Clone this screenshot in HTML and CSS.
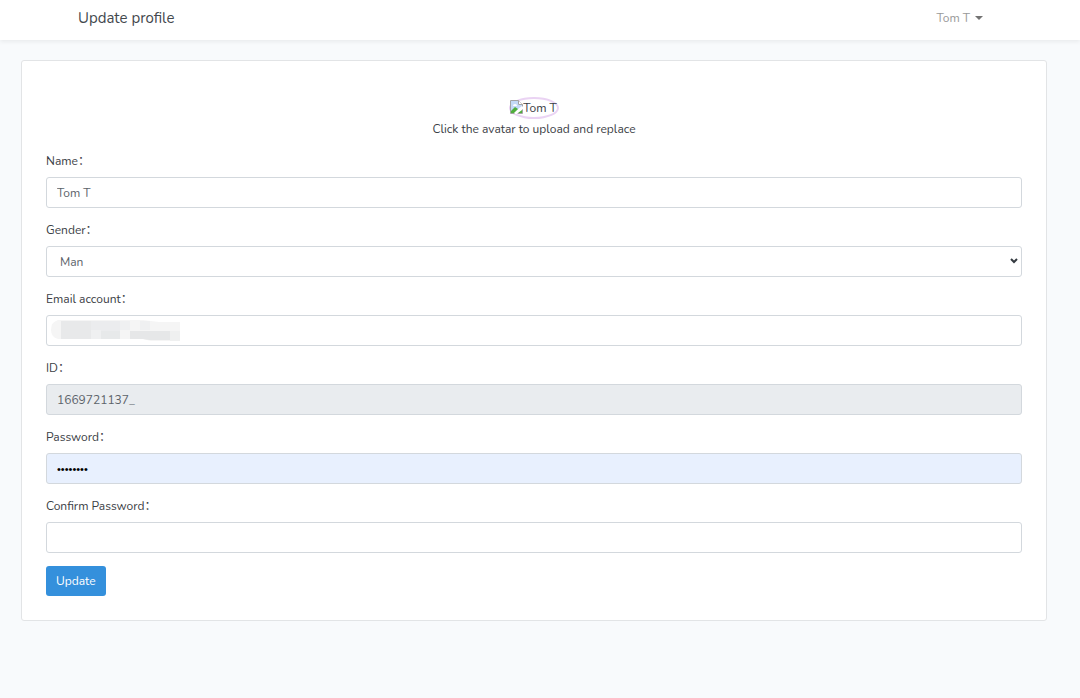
FILE: index.html
```html
<!DOCTYPE html>
<html lang="en">
<head>
    <meta charset="UTF-8">
    <meta name="viewport" content="width=device-width, initial-scale=1.0">
    <title>Update profile</title>
    <link rel="stylesheet" href="styles.css">
</head>
<body>
    <nav class="navbar">
        <a class="navbar-brand" href="#">Update profile</a>
        <a class="user-menu" href="#">Tom T</a>
    </nav>

    <main class="content">
        <form class="card">
            <div class="avatar-box">
                <button type="button" class="avatar">
                    <svg width="13" height="14" viewBox="0 0 13 14">
                        <path d="M0.500 0.500H8.500L12.500 4.500V13.500H0.500Z" fill="#fff" stroke="#a3a3a3"/>
                        <path d="M1 1H8V5H12V6L3 13H1Z" fill="#c3d9f7"/>
                        <path d="M3 6a2 2 0 0 1 4 0Z" fill="#fff"/>
                        <path d="M1 13V11L5 7L8 9L4 13Z" fill="#4fae3c"/>
                        <path d="M8.500 0.500V4.500H12.500" fill="#fff" stroke="#a3a3a3"/>
                        <path d="M4 14L13 6V9L7 14Z" fill="#fff"/>
                        <path d="M8 13L12 10V13Z" fill="#4fae3c"/>
                    </svg>
                    <span>Tom T</span>
                </button>
                <p class="avatar-tip">Click the avatar to upload and replace</p>
            </div>

            <div class="form-group">
                <label for="name">Name：</label>
                <input type="text" id="name" class="form-control" value="Tom T">
            </div>
            <div class="form-group">
                <label for="gender">Gender：</label>
                <div class="field">
                    <select id="gender" class="form-control">
                        <option>Man</option>
                        <option>Woman</option>
                    </select>
                    <svg class="chevron" width="8" height="6" viewBox="0 0 8 6">
                        <path d="M1 1L4 4L7 1" fill="none" stroke="#343a40" stroke-width="2"/>
                    </svg>
                </div>
            </div>
            <div class="form-group">
                <label for="email">Email account：</label>
                <div class="field">
                    <input type="email" id="email" class="form-control">
                    <svg class="redacted" width="136" height="23" viewBox="0 0 136 23">
                        <path d="M7 1H92L108 3H129V22H100L92 20H7Q0 18 0 11Q0 3 7 1Z" fill="#f5f5f5"/>
                        <path d="M10 2H40V20H10Z" fill="#e8e9ea"/>
                        <path d="M40 2H69V20H50V11H40Z" fill="#ebecee"/>
                        <path d="M40 11H50V20H40ZM69 2H79V11H69ZM89 2H99V11H89Z" fill="#eff0f1"/>
                        <path d="M50 12H69V20H50Z" fill="#e7e9ea"/>
                        <path d="M79 12H119V21H98L92 20H79Z" fill="#e6e7e8"/>
                        <path d="M119 12H129V22H119Z" fill="#eff0f0"/>
                    </svg>
                </div>
            </div>
            <div class="form-group">
                <label for="account-id">ID：</label>
                <input type="text" id="account-id" class="form-control" value="1669721137_" readonly>
            </div>
            <div class="form-group">
                <label for="password">Password：</label>
                <input type="password" id="password" class="form-control autofilled" value="12345678">
            </div>
            <div class="form-group">
                <label for="confirm">Confirm Password：</label>
                <input type="password" id="confirm" class="form-control">
            </div>
            <button type="submit" class="btn">Update</button>
        </form>
    </main>
</body>
</html>
```

FILE: styles.css
```css
* { box-sizing: border-box; }
body {
    margin: 0;
    font-family: Nunito, Lato, "Noto Sans CJK SC", sans-serif;
    font-size: 12px;
    line-height: 20px;
    color: #3b4045;
    background-color: #f8fafc;
}
.navbar {
    display: flex;
    justify-content: space-between;
    align-items: center;
    height: 40px;
    padding: 0 97px 4px 78px;
    background: #ffffff;
    box-shadow: 0 2px 4px rgba(0, 0, 0, 0.06);
}
.navbar-brand { font-size: 15px; color: #43484d; text-decoration: none; }
.user-menu {
    display: flex;
    align-items: center;
    gap: 5px;
    color: #999999;
    text-decoration: none;
}
.user-menu::after {
    content: "";
    border-top: 4px solid #737373;
    border-left: 4px solid transparent;
    border-right: 4px solid transparent;
}
.content { padding: 20px 33px 20px 21px; }
.card {
    padding: 36px 24px 24px;
    background: #ffffff;
    border: 1px solid #e2e4e6;
    border-radius: 3px;
}
.avatar-box {
    display: flex;
    flex-direction: column;
    align-items: center;
}
.avatar {
    display: flex;
    align-items: center;
    height: 22px;
    padding: 0;
    border: 2px solid #ead3f3;
    border-radius: 50%;
    background: none;
    font: inherit;
    color: inherit;
    cursor: pointer;
}
.avatar svg { margin: 0 0 3px -1px; }
.avatar-tip { margin: 0; }
.form-group { padding-top: 12px; }
.form-group label { display: block; height: 20px; margin-bottom: 6px; }
.form-control {
    display: block;
    width: 100%;
    height: 31px;
    padding: 0 10px;
    border: 1px solid #d3d8dd;
    border-radius: 3px;
    background: #ffffff;
    font: inherit;
    color: #5c636a;
}
.form-control[readonly] { background: #e9ecef; }
.form-control.autofilled {
    background: #e8f0fe;
    font-family: "Liberation Sans", sans-serif;
    font-size: 11px;
    color: #000000;
}
select.form-control { padding: 0 13px; appearance: none; }
.field { position: relative; }
.chevron { position: absolute; right: 4px; top: 12px; }
.redacted { position: absolute; left: 5px; top: 4px; }
.btn {
    display: block;
    height: 30px;
    margin-top: 13px;
    padding: 0 10px;
    border: none;
    border-radius: 3px;
    background-color: #3490dc;
    font: inherit;
    color: white;
    cursor: pointer;
}
.btn:hover { background-color: #227dc7; }
```
